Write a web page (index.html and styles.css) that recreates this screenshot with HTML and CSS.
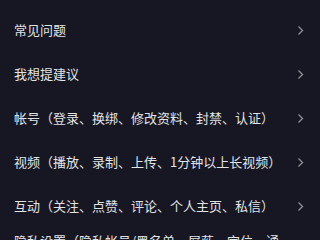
FILE: index.html
```html
<!DOCTYPE html>
<html lang="zh-CN">
<head>
    <meta charset="UTF-8">
    <meta name="viewport" content="width=device-width, initial-scale=1.0">
    <title>帮助</title>
    <link rel="stylesheet" href="styles.css">
</head>
<body>
    <ul class="help-list">
        <li class="help-item">
            <span class="help-text">常见问题</span>
            <svg class="chevron" viewBox="0 0 7 11"><polyline points="1.5,1.5 5.5,5.5 1.5,9.5"/></svg>
        </li>
        <li class="help-item">
            <span class="help-text">我想提建议</span>
            <svg class="chevron" viewBox="0 0 7 11"><polyline points="1.5,1.5 5.5,5.5 1.5,9.5"/></svg>
        </li>
        <li class="help-item">
            <span class="help-text">帐号（登录、换绑、修改资料、封禁、认证）</span>
            <svg class="chevron" viewBox="0 0 7 11"><polyline points="1.5,1.5 5.5,5.5 1.5,9.5"/></svg>
        </li>
        <li class="help-item">
            <span class="help-text">视频（播放、录制、上传、1分钟以上长视频）</span>
            <svg class="chevron" viewBox="0 0 7 11"><polyline points="1.5,1.5 5.5,5.5 1.5,9.5"/></svg>
        </li>
        <li class="help-item">
            <span class="help-text">互动（关注、点赞、评论、个人主页、私信）</span>
            <svg class="chevron" viewBox="0 0 7 11"><polyline points="1.5,1.5 5.5,5.5 1.5,9.5"/></svg>
        </li>
        <li class="help-item">
            <span class="help-text">隐私设置（隐私帐号/黑名单、屏蔽、定位、通讯录、个人信息保护）</span>
            <svg class="chevron" viewBox="0 0 7 11"><polyline points="1.5,1.5 5.5,5.5 1.5,9.5"/></svg>
        </li>
    </ul>
</body>
</html>
```

FILE: styles.css
```css
body {
    margin: 0;
    background-color: #161722;
    font-family: "Noto Sans CJK SC", "Noto Sans", sans-serif;
    overflow: hidden;
}
.help-list {
    list-style: none;
    margin: 0;
    padding: 8px 0 0 0;
}
.help-item {
    display: flex;
    align-items: center;
    min-height: 44px;
    padding: 0 16px 0 14px;
}
.help-text {
    flex: 1;
    color: #e3e3e6;
    font-size: 13px;
    line-height: 18px;
    padding-right: 12px;
}
.chevron {
    width: 7px;
    height: 11px;
    flex-shrink: 0;
    fill: none;
    stroke: #8a8b94;
    stroke-width: 1.4;
}
```
